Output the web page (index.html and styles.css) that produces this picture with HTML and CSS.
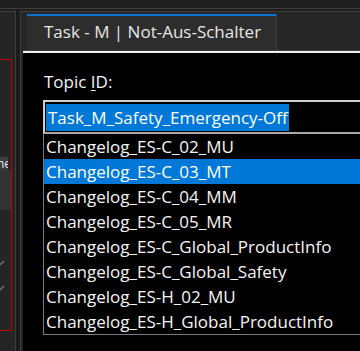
FILE: index.html
```html
<!DOCTYPE html>
<html lang="de">
<head>
  <meta charset="UTF-8">
  <title>Task - M | Not-Aus-Schalter</title>
  <link rel="stylesheet" href="styles.css">
</head>
<body>
  <div class="topbar"></div>
  <div class="workspace">
    <div class="sidebar">
      <div class="side-box">
        <div class="side-btn">ne</div>
        <div class="side-row"></div>
        <svg class="side-mark mark-1" width="6" height="8" viewBox="0 0 6 8"><path d="M0 6 L4 2" stroke="#6e6e6e" stroke-width="1.6"/></svg>
        <svg class="side-mark mark-2" width="6" height="8" viewBox="0 0 6 8"><path d="M0 6 L4 2" stroke="#6e6e6e" stroke-width="1.6"/></svg>
      </div>
    </div>
    <div class="gutter"></div>
    <div class="dialog">
      <div class="tabstrip">
        <div class="tab">Task - M | Not-Aus-Schalter</div>
      </div>
      <div class="panel">
        <div class="field-label">Topic <u>I</u>D:</div>
        <div class="combo">
          <div class="combo-input"><span class="combo-sel">Task_M_Safety_Emergency-Off</span></div>
          <div class="combo-list">
            <div class="combo-item">Changelog_ES-C_02_MU</div>
            <div class="combo-item active">Changelog_ES-C_03_MT</div>
            <div class="combo-item">Changelog_ES-C_04_MM</div>
            <div class="combo-item">Changelog_ES-C_05_MR</div>
            <div class="combo-item">Changelog_ES-C_Global_ProductInfo</div>
            <div class="combo-item">Changelog_ES-C_Global_Safety</div>
            <div class="combo-item">Changelog_ES-H_02_MU</div>
            <div class="combo-item">Changelog_ES-H_Global_ProductInfo</div>
          </div>
        </div>
      </div>
    </div>
  </div>
</body>
</html>
```

FILE: styles.css
```css
body { margin: 0; width: 360px; height: 351px; overflow: hidden; background: #1f1f1f; font-family: 'Open Sans', 'Noto Sans', sans-serif; color: #f2f2f2; }
.topbar { height: 8px; border-bottom: 1px solid #3d3d3d; }
.workspace { display: flex; height: 342px; }
.sidebar { width: 15px; margin-top: 2px; border-top: 1px solid #3d3d3d; border-right: 1px solid #3d3d3d; background: #252525; flex-shrink: 0; }
.side-box { position: relative; margin-top: 47px; width: 11px; height: 270px; border: 1px solid #c00000; border-left: none; background: #252525; }
.side-btn { margin-top: 97px; width: 8px; height: 13px; overflow: hidden; background: #3e3e3e; color: #e8e8e8; font-size: 12px; line-height: 13px; text-indent: -3px; white-space: nowrap; }
.side-row { height: 40px; background: #333; }
.side-mark { position: absolute; left: 0; }
.mark-1 { top: 199px; }
.mark-2 { top: 224px; }
.gutter { width: 4px; background: #1c1c1c; flex-shrink: 0; }
.dialog { flex: 1; margin-top: 2px; border-top: 1px solid #3d3d3d; border-left: 1px solid #3d3d3d; background: #262626; padding-left: 2px; display: flex; flex-direction: column; min-width: 0; }
.tabstrip { height: 36px; padding-top: 2px; border-bottom: 1px solid #3d3d3d; background: #262626; display: flex; }
.tab { margin-left: 4px; width: 232px; height: 34px; border-top: 2px solid #0a74d0; border-right: 1px solid #3d3d3d; background: #2d2d2d; color: #e6e6e6; font-size: 17px; line-height: 32px; padding-left: 17px; white-space: nowrap; }
.panel { flex: 1; background: #000; border-top: 2px solid #f0f0f0; padding: 0 0 0 20px; }
.field-label { margin: 17px 0 0 1px; font-size: 17px; line-height: 24px; color: #f5f5f5; }
.field-label u { text-underline-offset: 2px; }
.combo { margin-top: 6px; width: 330px; }
.combo-input { height: 28px; border: 2px solid #cfcfcf; border-bottom-color: #a8a8a8; padding: 2px 0 0 1px; }
.combo-sel { display: inline-block; height: 27px; background: #0078d7; color: #fff; font-size: 17px; line-height: 27px; padding: 0 1px 0 2px; white-space: nowrap; }
.combo-list { border: 1px solid #7a7a7a; border-top: none; }
.combo-item { height: 25px; line-height: 25px; font-size: 17px; padding-left: 2px; white-space: nowrap; color: #f5f5f5; }
.combo-item.active { background: #0078d7; color: #fff; }
```
